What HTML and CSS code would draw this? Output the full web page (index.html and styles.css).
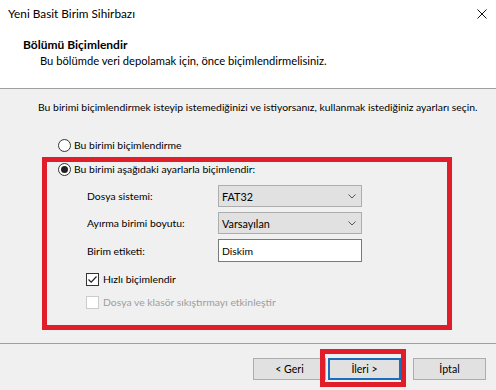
FILE: index.html
```html
<!DOCTYPE html>
<html lang="tr">
<head>
<meta charset="utf-8">
<title>Yeni Basit Birim Sihirbazı</title>
<link rel="stylesheet" href="styles.css">
</head>
<body>
<div class="window">
  <div class="header">
    <div class="titlebar">
      <span class="title">Yeni Basit Birim Sihirbazı</span>
      <svg class="close" width="10" height="10" viewBox="0 0 10 10"><path d="M0.5 0.5 L9.5 9.5 M9.5 0.5 L0.5 9.5" stroke="#111" stroke-width="1" fill="none"/></svg>
    </div>
    <div class="heading">Bölümü Biçimlendir</div>
    <div class="sub">Bu bölümde veri depolamak için, önce biçimlendirmelisiniz.</div>
  </div>
  <div class="content">
    <div class="intro">Bu birimi biçimlendirmek isteyip istemediğinizi ve istiyorsanız, kullanmak istediğiniz ayarları seçin.</div>
    <div class="row radio-row first">
      <span class="radio"></span>
      <span>Bu birimi biçimlendirme</span>
    </div>
    <div class="group">
      <div class="row radio-row second">
        <span class="radio checked"></span>
        <span>Bu birimi aşağıdaki ayarlarla biçimlendir:</span>
      </div>
      <div class="form">
        <span class="label">Dosya sistemi:</span>
        <div class="combo"><span>FAT32</span><svg width="8" height="5" viewBox="0 0 8 5"><path d="M0.5 0.5 L4 4 L7.5 0.5" stroke="#555" stroke-width="1" fill="none"/></svg></div>
        <span class="label">Ayırma birimi boyutu:</span>
        <div class="combo"><span>Varsayılan</span><svg width="8" height="5" viewBox="0 0 8 5"><path d="M0.5 0.5 L4 4 L7.5 0.5" stroke="#555" stroke-width="1" fill="none"/></svg></div>
        <span class="label">Birim etiketi:</span>
        <div class="input">Diskim</div>
      </div>
      <div class="row check-row quick">
        <span class="check"><svg width="11" height="11" viewBox="0 0 11 11"><path d="M1.5 5.5 L4.2 8.2 L9.5 2.5" stroke="#222" stroke-width="1.2" fill="none"/></svg></span>
        <span>Hızlı biçimlendir</span>
      </div>
      <div class="row check-row disabled">
        <span class="check off"></span>
        <span>Dosya ve klasör sıkıştırmayı etkinleştir</span>
      </div>
    </div>
  </div>
  <div class="footer">
    <button class="btn">&lt; Geri</button>
    <button class="btn default marked">İleri &gt;</button>
    <button class="btn cancel">İptal</button>
  </div>
</div>
</body>
</html>
```
FILE: styles.css
```css
html, body {
  margin: 0;
  padding: 0;
}
body {
  font-family: Lato, "Noto Sans", sans-serif;
  font-size: 10.4px;
  color: #000;
  background: #f0f0f0;
}
.window {
  width: 496px;
  height: 390px;
  background: #f0f0f0;
  display: flex;
  flex-direction: column;
  overflow: hidden;
}
.header {
  background: #fff;
  height: 89px;
  box-sizing: border-box;
  border-bottom: 1px solid #a0a0a0;
}
.titlebar {
  height: 28px;
  display: flex;
  align-items: center;
  justify-content: space-between;
  padding: 0 9px 0 8px;
}
.title {
  font-size: 11.8px;
  line-height: 16px;
}
.heading {
  font-size: 12px;
  font-weight: bold;
  line-height: 16px;
  margin: 9px 0 0 23px;
}
.sub {
  font-size: 11.2px;
  line-height: 16px;
  margin-left: 40px;
}
.content {
  padding-top: 10px;
}
.intro {
  line-height: 16px;
  margin-left: 38px;
  white-space: nowrap;
}
.row {
  display: flex;
  align-items: center;
  line-height: 16px;
  height: 16px;
}
.radio-row {
  gap: 3px;
}
.radio-row.first {
  margin: 22px 0 0 58px;
}
.radio {
  width: 13px;
  height: 13px;
  box-sizing: border-box;
  border: 1px solid #333;
  border-radius: 50%;
  background: #fff;
  display: flex;
  align-items: center;
  justify-content: center;
}
.radio.checked::before {
  content: "";
  width: 7px;
  height: 7px;
  border-radius: 50%;
  background: #222;
}
.group {
  margin: 4px 0 0 42px;
  width: 410px;
  height: 173px;
  box-sizing: border-box;
  border: 5px solid #e11d2a;
}
.radio-row.second {
  height: 14px;
  margin-left: 11px;
}
.form {
  margin: 9px 0 0 40px;
  display: grid;
  grid-template-columns: 131px 144px;
  grid-template-rows: 22px 22px 23px;
  row-gap: 5px;
  align-items: center;
}
.label {
  line-height: 16px;
}
.combo {
  height: 22px;
  box-sizing: border-box;
  border: 1px solid #adadad;
  background: #e1e1e1;
  display: flex;
  align-items: center;
  justify-content: space-between;
  padding: 0 5px 0 3px;
  font-size: 10.8px;
}
.input {
  height: 23px;
  box-sizing: border-box;
  border: 1px solid #7a7a7a;
  background: #fff;
  display: flex;
  align-items: center;
  padding-left: 3px;
}
.check-row {
  gap: 4px;
  margin-left: 39px;
}
.check-row.quick {
  margin-top: 9px;
}
.check-row.disabled {
  margin-top: 7px;
  color: #9d9d9d;
}
.check {
  width: 13px;
  height: 13px;
  box-sizing: border-box;
  border: 1px solid #333;
  background: #fff;
  display: flex;
  align-items: center;
  justify-content: center;
}
.check.off {
  border-color: #cccccc;
}
.footer {
  margin-top: 13px;
  border-top: 1px solid #a0a0a0;
  padding: 14px 10px 0 253px;
  display: flex;
  gap: 2px;
}
.btn {
  width: 73px;
  height: 22px;
  box-sizing: border-box;
  border: 1px solid #adadad;
  background: #e1e1e1;
  font-family: inherit;
  font-size: 10.6px;
  color: #000;
  padding: 0;
}
.btn.default {
  border: 2px solid #1a6fbb;
}
.btn.cancel {
  margin-left: 10px;
}
.marked {
  position: relative;
}
.marked::after {
  content: "";
  position: absolute;
  top: -11px;
  right: -7px;
  bottom: -9px;
  left: -10px;
  border: 5px solid #e11d2a;
  pointer-events: none;
}
```
